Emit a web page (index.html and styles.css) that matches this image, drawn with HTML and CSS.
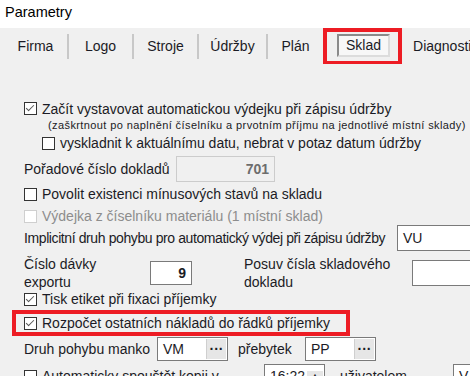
FILE: index.html
```html
<!DOCTYPE html>
<html lang="cs">
<head>
 <meta charset="UTF-8">
 <title>Parametry</title>
 <link rel="stylesheet" href="styles.css">
</head>
<body>
 <div class="titlebar">Parametry</div>
 <nav class="tabs">
 <span class="tab">Firma</span>
 <span class="sep"></span>
 <span class="tab">Logo</span>
 <span class="sep"></span>
 <span class="tab">Stroje</span>
 <span class="sep"></span>
 <span class="tab t-wide">Údržby</span>
 <span class="sep"></span>
 <span class="tab t-plan">Plán</span>
 <span class="mark"><span class="tab active">Sklad</span></span>
 <span class="tab">Diagnostika</span>
 </nav>
 <section class="panel">
 <div class="row chk-row first">
 <span class="box checked"></span>
 <span>Začít vystavovat automatickou výdejku při zápisu údržby</span>
 </div>
 <div class="note">(zaškrtnout po naplnění číselníku a prvotním příjmu na jednotlivé místní sklady)</div>
 <div class="row chk-row indent">
 <span class="box"></span>
 <span>vyskladnit k aktuálnímu datu, nebrat v potaz datum údržby</span>
 </div>
 <div class="row doc-row">
 <span class="label-doc">Pořadové číslo dokladů</span>
 <span class="field disabled num">701</span>
 </div>
 <div class="row chk-row minus">
 <span class="box"></span>
 <span>Povolit existenci mínusových stavů na skladu</span>
 </div>
 <div class="row chk-row muted">
 <span class="box off"></span>
 <span>Výdejka z číselníku materiálu (1 místní sklad)</span>
 </div>
 <div class="row impl-row">
 <span class="w-impl">Implicitní druh pohybu pro automatický výdej při zápisu údržby</span>
 <span class="field wide">VU</span>
 </div>
 <div class="row export-row">
 <span class="two-line w-batch">Číslo dávky<br>exportu</span>
 <span class="field num small">9</span>
 <span class="two-line w-shift">Posuv čísla skladového<br>dokladu</span>
 <span class="field shift"></span>
 </div>
 <div class="row chk-row print">
 <span class="box checked"></span>
 <span>Tisk etiket při fixaci příjemky</span>
 </div>
 <div class="row chk-row marked">
 <span class="box checked"></span>
 <span>Rozpočet ostatních nákladů do řádků příjemky</span>
 </div>
 <div class="row pick-row">
 <span class="w-manko">Druh pohybu manko</span>
 <span class="field pick"><span>VM</span><span class="dots">&middot;&middot;&middot;</span></span>
 <span class="w-extra">přebytek</span>
 <span class="field pick"><span>PP</span><span class="dots">&middot;&middot;&middot;</span></span>
 </div>
 <div class="row chk-row last">
 <span class="box"></span>
 <span class="w-auto">Automaticky spouštět kopii v</span>
 <span class="field spin"><span>16:22</span><span class="arrow">&#9650;</span></span>
 <span class="w-user">uživatelem</span>
 <span class="field user">V</span>
 </div>
 </section>
</body>
</html>
```

FILE: styles.css
```css
body {
margin: 0;
padding: 0;
width: 470px;
height: 376px;
overflow: hidden;
background-color: #f0f0f0;
font-family: 'Liberation Sans', Arial, sans-serif;
font-size: 14px;
color: #1b1b25;
}
.titlebar {
background-color: #fff;
height: 28px;
line-height: 24px;
padding-left: 5px;
font-size: 14.5px;
color: #000;
}
.tabs {
display: flex;
align-items: center;
height: 36px;
padding-left: 4px;
white-space: nowrap;
overflow: hidden;
}
.tab {
width: 63px;
text-align: center;
flex: none;
}
.t-wide {
width: 67px;
}
.t-plan {
width: 55px;
}
.sep {
width: 2px;
height: 25px;
background-color: #c8c8c8;
flex: none;
}
.mark {
border: 4px solid #ed1c24;
padding: 2px 8px 4px 10px;
margin-right: 11px;
flex: none;
}
.tab.active {
display: block;
width: auto;
background-color: #f7f7f7;
border: 2px solid #8a8a8a;
border-right-color: #dcdcdc;
border-bottom-color: #dcdcdc;
padding: 0 7px;
height: 19px;
line-height: 19px;
}
/* Sklad tab panel */
.panel {
padding-left: 24px;
}
.row {
display: flex;
align-items: center;
white-space: nowrap;
}
.chk-row {
height: 21px;
gap: 5px;
}
.first {
margin-top: 34px;
}
.indent {
margin-left: 18px;
height: 22px;
}
.note {
font-size: 11px;
padding-left: 24px;
height: 13px;
line-height: 13px;
letter-spacing: 0.4px;
white-space: nowrap;
}
.box {
width: 11px;
height: 11px;
border: 1px solid #333;
background-color: #fff;
position: relative;
flex: none;
}
.box.checked::after {
content: "";
position: absolute;
left: 3px;
top: 0;
width: 3px;
height: 7px;
border: solid #555;
border-width: 0 1.5px 1.5px 0;
transform: rotate(45deg);
}
.box.off {
border-color: #cfcfcf;
}
.muted {
color: #8d8d8d;
height: 24px;
}
.doc-row {
height: 30px;
}
.label-doc {
width: 152px;
flex: none;
}
.minus {
height: 20px;
}
.field {
display: inline-flex;
align-items: center;
box-sizing: border-box;
border: 1px solid #7a7a7a;
background-color: #fff;
height: 24px;
padding: 0 5px;
flex: none;
}
.field.disabled {
width: 99px;
height: 26px;
background-color: #f0f0f0;
border-color: #cccccc;
color: #6d6d6d;
}
.num {
justify-content: flex-end;
font-weight: bold;
}
.impl-row {
height: 20px;
}
.w-impl {
width: 373px;
flex: none;
letter-spacing: -0.4px;
}
.field.wide {
width: 90px;
height: 26px;
}
.export-row {
margin-top: 8px;
height: 34px;
}
.two-line {
line-height: 18px;
flex: none;
}
.w-batch {
width: 126px;
}
.field.small {
width: 42px;
height: 24px;
}
.w-shift {
width: 168px;
margin-left: 52px;
}
.field.shift {
width: 70px;
height: 26px;
}
.print {
height: 18px;
}
.marked {
margin-top: 2px;
margin-left: -12px;
padding-left: 8px;
width: 322px;
height: 18px;
border: 4px solid #ed1c24;
}
.pick-row {
height: 25px;
}
.w-manko {
width: 133px;
flex: none;
}
.field.pick {
width: 71px;
height: 24px;
padding: 0 1px 0 5px;
justify-content: space-between;
}
.dots {
width: 19px;
height: 20px;
background-color: #e6e6e6;
border-left: 1px solid #cfcfcf;
text-align: center;
font-weight: bold;
line-height: 20px;
}
.w-extra {
width: 67px;
margin-left: 10px;
flex: none;
}
.last {
margin-top: 3px;
height: 24px;
}
.w-auto {
width: 217px;
flex: none;
}
.field.spin {
width: 61px;
padding: 0 1px 0 5px;
justify-content: space-between;
}
.arrow {
font-size: 9px;
width: 16px;
text-align: center;
background-color: #e6e6e6;
}
.w-user {
margin-left: 10px;
width: 108px;
flex: none;
}
.field.user {
width: 40px;
}
```
